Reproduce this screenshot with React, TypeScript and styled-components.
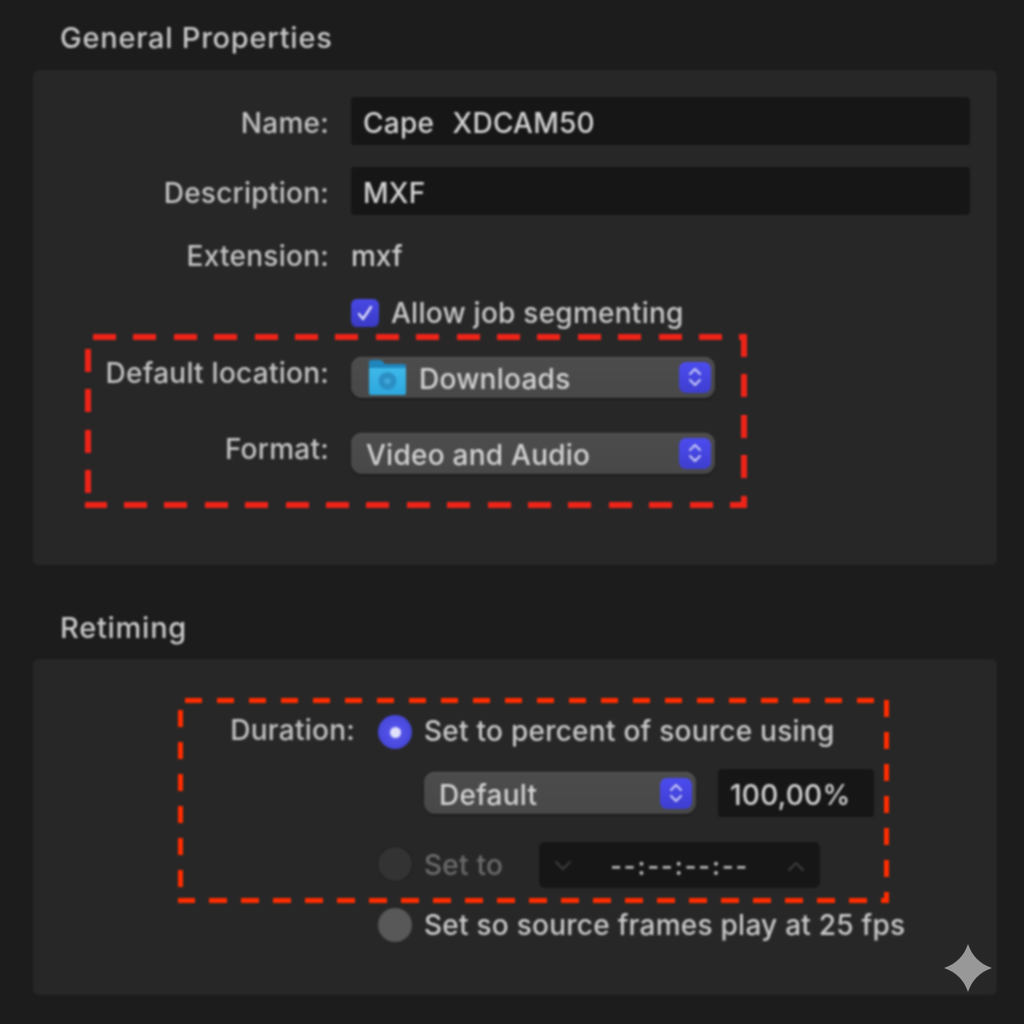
import React from 'react';
import styled, { createGlobalStyle } from 'styled-components';

const GlobalStyle = createGlobalStyle`
  html, body {
    margin: 0;
    background: #1c1c1c;
  }
  * {
    box-sizing: border-box;
  }
`;

const Page = styled.div`
  position: relative;
  width: 1024px;
  height: 1024px;
  overflow: hidden;
  background: #1c1c1c;
  padding: 0 27px 0 33px;
  font-family: Inter, 'Liberation Sans', sans-serif;
  font-size: 28px;
  font-weight: 500;
  letter-spacing: 0.25px;
  color: #c9c9c9;
`;

const Blurred = styled.div`
  filter: blur(0.9px);
`;

const SectionTitle = styled.h2<{ $height: number; $paddingTop: number }>`
  display: flex;
  align-items: center;
  height: ${(p) => p.$height}px;
  margin: 0;
  padding: ${(p) => p.$paddingTop}px 0 0 27px;
  font-size: 29px;
  font-weight: 500;
  letter-spacing: 0.75px;
  color: #c8c8c8;
`;

const Panel = styled.section<{ $height: number; $paddingTop: number }>`
  display: flex;
  flex-direction: column;
  height: ${(p) => p.$height}px;
  padding-top: ${(p) => p.$paddingTop}px;
  background: #272727;
  border-radius: 6px;
`;

const Row = styled.div<{ $labelWidth: number; $gap: number; $top?: number; $height: number }>`
  display: grid;
  grid-template-columns: ${(p) => p.$labelWidth}px 1fr;
  column-gap: ${(p) => p.$gap}px;
  align-items: center;
  height: ${(p) => p.$height}px;
  margin-top: ${(p) => p.$top ?? 0}px;
`;

const Label = styled.label<{ $up?: number; $down?: number }>`
  text-align: right;
  white-space: nowrap;
  color: #c2c2c2;
  margin-bottom: ${(p) => p.$up ?? 0}px;
  margin-top: ${(p) => p.$down ?? 0}px;
`;

const TextField = styled.div<{ $width: number }>`
  display: flex;
  align-items: center;
  width: ${(p) => p.$width}px;
  height: 100%;
  padding: 3px 0 0 12px;
  background: #161616;
  border-radius: 4px;
  color: #d4d4d4;
  white-space: pre;
  word-spacing: 1.5px;
`;

const Value = styled.span`
  color: #cccccc;
  letter-spacing: 0;
`;

const dashes = (angle: number, color: string, phase: number, dash: number, period: number) =>
  `repeating-linear-gradient(${angle}deg, ${color} ${phase}px ${phase + dash}px, transparent ${phase + dash}px ${phase + period}px)`;

// dash phases run clockwise from the top edge: top, right, bottom, left
const Highlight = styled.div<{
  $left: number;
  $top: number;
  $width: number;
  $paddingTop: number;
  $paddingBottom: number;
  $period: number;
  $dash: number;
  $thick: number;
  $color: string;
  $phases: [number, number, number, number];
}>`
  width: ${(p) => p.$width}px;
  margin: ${(p) => p.$top}px 0 0 ${(p) => p.$left}px;
  padding: ${(p) => p.$paddingTop}px 0 ${(p) => p.$paddingBottom}px;
  background:
    ${(p) => dashes(90, p.$color, p.$phases[0], p.$dash, p.$period)} left top / 100% ${(p) => p.$thick}px no-repeat,
    ${(p) => dashes(180, p.$color, p.$phases[1], p.$dash, p.$period)} right top / ${(p) => p.$thick}px 100% no-repeat,
    ${(p) => dashes(90, p.$color, p.$phases[2], p.$dash, p.$period)} left bottom / 100% ${(p) => p.$thick}px no-repeat,
    ${(p) => dashes(180, p.$color, p.$phases[3], p.$dash, p.$period)} left top / ${(p) => p.$thick}px 100% no-repeat;
`;

const SelectBox = styled.div<{ $width: number; $height: number }>`
  display: flex;
  align-items: center;
  width: ${(p) => p.$width}px;
  height: ${(p) => p.$height}px;
  padding: 3px 4px 0 15px;
  background: linear-gradient(180deg, #4c4c4c, #484848);
  border-radius: 11px;
  box-shadow: 0 1px 2px #111, inset 0 1px 0 #5a5a5a;
  color: #d2d2d2;
`;

const SelectText = styled.span`
  flex: 1;
  white-space: nowrap;
`;

const Stepper = styled.span`
  display: flex;
  align-items: center;
  justify-content: center;
  width: 32px;
  height: 31px;
  margin-top: -3px;
  background: linear-gradient(180deg, #4c4cf0, #3e3ed0);
  border-radius: 7px;
`;

const StepperIcon = () => (
  <svg width="18" height="24" viewBox="0 0 18 24" fill="none" stroke="#c9cbf5" strokeWidth="2" strokeLinecap="round" strokeLinejoin="round">
    <path d="M4 9l5-5 5 5" />
    <path d="M4 15l5 5 5-5" />
  </svg>
);

const FolderIcon = styled.svg`
  flex: none;
  margin-left: 3px;
  margin-right: 13px;
  margin-top: -3px;
`;

const Downloads = () => (
  <FolderIcon width="37" height="36" viewBox="0 0 37 36">
    <defs>
      <linearGradient id="folderFront" x1="0" y1="0" x2="0" y2="1">
        <stop offset="0" stopColor="#3fb8ea" />
        <stop offset="1" stopColor="#2ca8de" />
      </linearGradient>
    </defs>
    <path d="M0 3a2 2 0 0 1 2-2h10l4 4h19a2 2 0 0 1 2 2v6H0z" fill="#1f86bd" />
    <path d="M0 9h37v25a2 2 0 0 1-2 2H2a2 2 0 0 1-2-2z" fill="url(#folderFront)" />
    <circle cx="18.5" cy="22" r="9" fill="#2b8fc4" />
    <circle cx="18.5" cy="22" r="3" fill="#3fa8da" />
  </FolderIcon>
);

const CheckRow = styled.div`
  display: flex;
  align-items: center;
  gap: 12px;
  height: 30px;
  margin: 18px 0 0 318px;
  color: #c8c8c8;
`;

const Checkbox = styled.span`
  display: flex;
  align-items: center;
  justify-content: center;
  width: 28px;
  height: 28px;
  background: linear-gradient(180deg, #4848e4, #3a3ac8);
  border-radius: 6px;
`;

const RadioLine = styled.div`
  display: flex;
  align-items: center;
  gap: 12px;
  white-space: nowrap;
`;

const Radio = styled.span<{ $variant: 'on' | 'off' | 'idle' }>`
  display: flex;
  flex: none;
  align-items: center;
  justify-content: center;
  width: 34px;
  height: 34px;
  margin-bottom: ${(p) => (p.$variant === 'off' ? 2 : 0)}px;
  border-radius: 50%;
  background: ${(p) =>
    p.$variant === 'on' ? 'radial-gradient(circle, #5a5af4, #3e3ecc)' : p.$variant === 'off' ? '#333333' : '#585858'};
  box-shadow: ${(p) => (p.$variant === 'off' ? '0 0 0 1px #1f1f1f' : 'none')};
`;

const RadioDot = styled.span`
  width: 11px;
  height: 11px;
  border-radius: 50%;
  background: #e0e0fa;
`;

const RadioText = styled.span<{ $dim?: boolean; $up?: number }>`
  color: ${(p) => (p.$dim ? '#6a6a6a' : '#c8c8c8')};
  margin-bottom: ${(p) => p.$up ?? 0}px;
`;

const Indented = styled.div<{ $left: number; $top: number; $height: number; $gap: number }>`
  display: flex;
  align-items: center;
  gap: ${(p) => p.$gap}px;
  height: ${(p) => p.$height}px;
  margin: ${(p) => p.$top}px 0 0 ${(p) => p.$left}px;
`;

const TimeField = styled.div`
  display: flex;
  align-items: center;
  justify-content: space-between;
  width: 281px;
  height: 46px;
  margin-left: 24px;
  padding: 2px 14px 0;
  background: #161616;
  border-radius: 6px;
  color: #b8b8b8;
  font-size: 25px;
  font-weight: 600;
  letter-spacing: 2px;
`;

const Chevron = ({ up }: { up?: boolean }) => (
  <svg width="20" height="12" viewBox="0 0 20 12" fill="none" stroke="#3d3d3d" strokeWidth="2" strokeLinecap="round" strokeLinejoin="round">
    <path d={up ? 'M3 10l7-7 7 7' : 'M3 2l7 7 7-7'} />
  </svg>
);

const Sparkle = styled.svg`
  position: absolute;
  left: 943px;
  top: 943px;
`;

export default function App() {
  return (
    <>
      <GlobalStyle />
      <Page>
        <Blurred>
          <SectionTitle $height={70} $paddingTop={4}>General Properties</SectionTitle>
          <Panel $height={495} $paddingTop={27}>
            <Row $labelWidth={296} $gap={22} $height={48}>
              <Label $down={4}>Name:</Label>
              <TextField $width={619}>Cape  XDCAM50</TextField>
            </Row>
            <Row $labelWidth={296} $gap={22} $height={48} $top={22}>
              <Label $down={4}>Description:</Label>
              <TextField $width={619}>MXF</TextField>
            </Row>
            <Row $labelWidth={296} $gap={22} $height={48} $top={17}>
              <Label>Extension:</Label>
              <Value>mxf</Value>
            </Row>
            <CheckRow>
              <Checkbox>
                <svg width="20" height="20" viewBox="0 0 20 20" fill="none" stroke="#dcdcf8" strokeWidth="2.4" strokeLinecap="round" strokeLinejoin="round">
                  <path d="M4 11l4 5 8-12" />
                </svg>
              </Checkbox>
              Allow job segmenting
            </CheckRow>
            <Highlight
              $left={52}
              $top={6}
              $width={662}
              $paddingTop={22}
              $paddingBottom={35}
              $period={40.4}
              $dash={23}
              $thick={6}
              $color="#ee2419"
              $phases={[8, 0, -1.5, 15]}
            >
              <Row $labelWidth={244} $gap={22} $height={41}>
                <Label $up={8}>Default location:</Label>
                <SelectBox $width={364} $height={41}>
                  <Downloads />
                  <SelectText>Downloads</SelectText>
                  <Stepper>
                    <StepperIcon />
                  </Stepper>
                </SelectBox>
              </Row>
              <Row $labelWidth={244} $gap={22} $height={41} $top={35}>
                <Label $up={8}>Format:</Label>
                <SelectBox $width={364} $height={41}>
                  <SelectText>Video and Audio</SelectText>
                  <Stepper>
                    <StepperIcon />
                  </Stepper>
                </SelectBox>
              </Row>
            </Highlight>
          </Panel>
          <SectionTitle $height={94} $paddingTop={30}>Retiming</SectionTitle>
          <Panel $height={336} $paddingTop={0}>
            <Highlight
              $left={145}
              $top={39}
              $width={711}
              $paddingTop={15}
              $paddingBottom={15}
              $period={32}
              $dash={17.5}
              $thick={5}
              $color="#ff2d00"
              $phases={[7, 2, -1, 12]}
            >
              <Row $labelWidth={177} $gap={23} $height={34}>
                <Label $up={4}>Duration:</Label>
                <RadioLine>
                  <Radio $variant="on">
                    <RadioDot />
                  </Radio>
                  <RadioText $up={3}>Set to percent of source using</RadioText>
                </RadioLine>
              </Row>
              <Indented $left={246} $top={22} $height={48} $gap={22}>
                <SelectBox $width={272} $height={42}>
                  <SelectText>Default</SelectText>
                  <Stepper>
                    <StepperIcon />
                  </Stepper>
                </SelectBox>
                <TextField $width={156}>100,00%</TextField>
              </Indented>
              <Indented $left={200} $top={25} $height={46} $gap={12}>
                <Radio $variant="off" />
                <RadioText $dim>Set to</RadioText>
                <TimeField>
                  <Chevron />
                  <span>--:--:--:--</span>
                  <Chevron up />
                </TimeField>
              </Indented>
            </Highlight>
            <Indented $left={345} $top={5} $height={34} $gap={12}>
              <Radio $variant="idle" />
              <RadioText>Set so source frames play at 25 fps</RadioText>
            </Indented>
          </Panel>
        </Blurred>
        <Sparkle width="50" height="50" viewBox="0 0 50 50">
          <path d="M25 1C29 13 37 21 49 25C37 29 29 37 25 49C21 37 13 29 1 25C13 21 21 13 25 1Z" fill="#989898" />
        </Sparkle>
      </Page>
    </>
  );
}
